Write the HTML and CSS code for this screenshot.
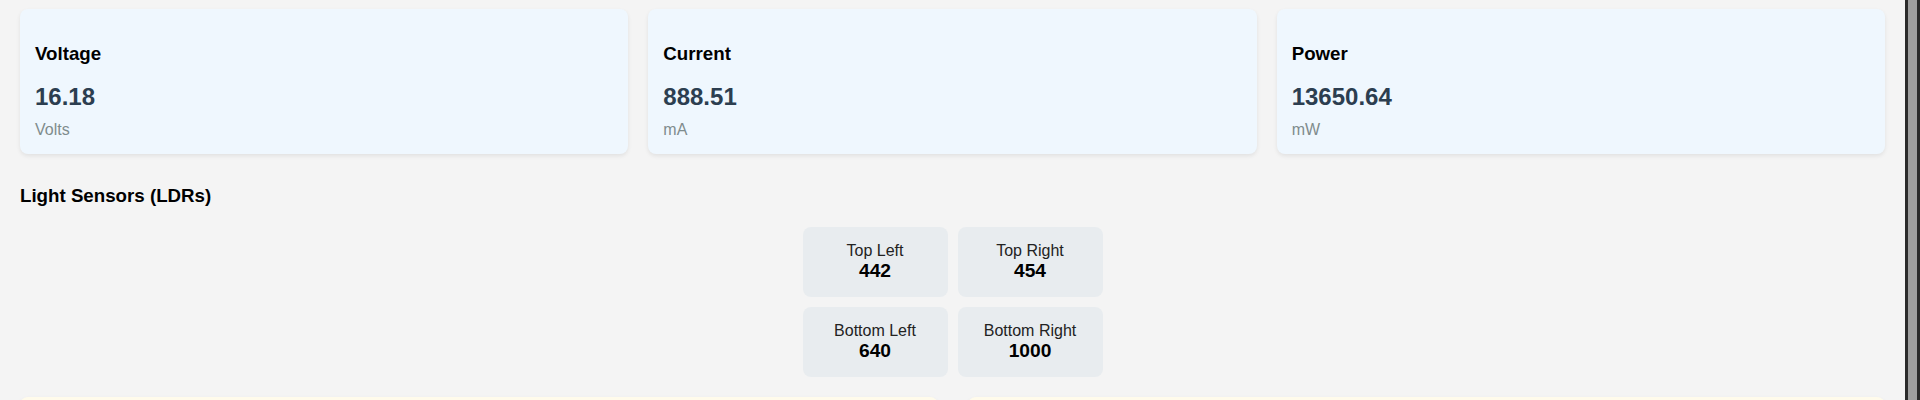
FILE: index.html
```html
<!DOCTYPE html>
<html lang="en">
<head>
<meta charset="utf-8">
<title>Solar Tracker Dashboard</title>
<link rel="stylesheet" href="styles.css">
</head>
<body>
<div class="page">
  <div class="metrics">
    <div class="metric-card">
      <h3 class="metric-title">Voltage</h3>
      <div class="metric-value">16.18</div>
      <div class="metric-unit">Volts</div>
    </div>
    <div class="metric-card">
      <h3 class="metric-title">Current</h3>
      <div class="metric-value">888.51</div>
      <div class="metric-unit">mA</div>
    </div>
    <div class="metric-card">
      <h3 class="metric-title">Power</h3>
      <div class="metric-value">13650.64</div>
      <div class="metric-unit">mW</div>
    </div>
  </div>

  <h3 class="section-title">Light Sensors (LDRs)</h3>
  <div class="ldr-grid">
    <div class="ldr-box"><div class="ldr-label">Top Left</div><div class="ldr-value">442</div></div>
    <div class="ldr-box"><div class="ldr-label">Top Right</div><div class="ldr-value">454</div></div>
    <div class="ldr-box"><div class="ldr-label">Bottom Left</div><div class="ldr-value">640</div></div>
    <div class="ldr-box"><div class="ldr-label">Bottom Right</div><div class="ldr-value">1000</div></div>
  </div>

  <div class="panels">
    <div class="panel"></div>
    <div class="panel"></div>
  </div>
</div>
<div class="scrollbar"><div class="scrollbar-thumb"></div></div>
</body>
</html>
```
FILE: styles.css
```css
html, body {
  margin: 0;
  padding: 0;
}
body {
  background: #f4f4f4;
  font-family: "Liberation Sans", Arial, sans-serif;
  color: #000;
}
.page {
  padding: 9px 20px 20px;
  margin-right: 15px;
}
.metrics {
  display: grid;
  grid-template-columns: repeat(3, 1fr);
  gap: 20px;
}
.metric-card {
  background: #eff7fe;
  border-radius: 8px;
  padding: 15px;
  box-shadow: 0 2px 4px rgba(0, 0, 0, 0.08);
}
.metric-title {
  font-size: 18.72px;
  font-weight: bold;
  margin: 18.72px 0;
}
.metric-value {
  font-size: 24px;
  font-weight: bold;
  color: #2c3e50;
  margin-bottom: 10px;
}
.metric-unit {
  font-size: 16px;
  color: #7f8c8d;
}
.section-title {
  font-size: 18.72px;
  font-weight: bold;
  margin: 31px 0 20px;
}
.ldr-grid {
  display: grid;
  grid-template-columns: 1fr 1fr;
  gap: 10px;
  width: 300px;
  margin: 0 auto;
}
.ldr-box {
  background: #e8ecef;
  border-radius: 8px;
  padding: 15px;
  text-align: center;
}
.ldr-label {
  font-size: 16px;
  color: #222;
}
.ldr-value {
  font-size: 19.2px;
  font-weight: bold;
}
.panels {
  display: grid;
  grid-template-columns: 1fr 1fr;
  gap: 30px;
  margin-top: 20px;
}
.panel {
  background: #fffbeb;
  border-radius: 8px;
  min-height: 200px;
  box-shadow: 0 2px 4px rgba(0, 0, 0, 0.08);
}
.scrollbar {
  position: fixed;
  top: 0;
  right: 0;
  width: 15px;
  height: 100vh;
  background: #2b2b2b;
  display: flex;
  justify-content: center;
}
.scrollbar-thumb {
  width: 9px;
  height: 100%;
  background: #9f9f9f;
}
```
